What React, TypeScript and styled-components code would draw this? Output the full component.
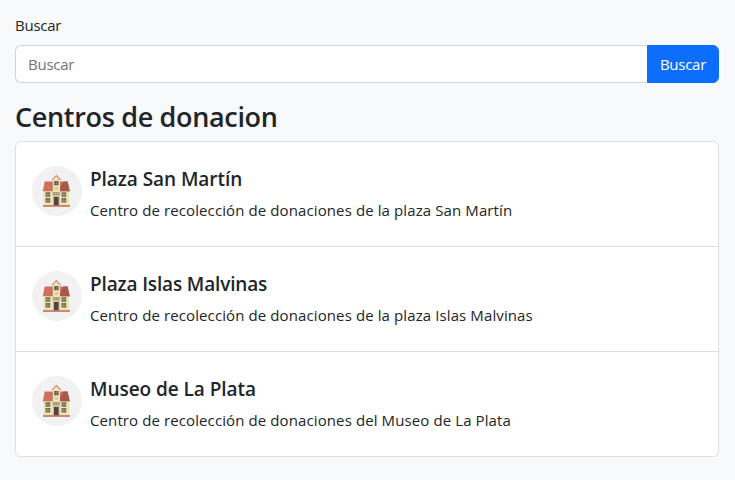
import React from "react";
import styled, { createGlobalStyle } from "styled-components";

const GlobalStyle = createGlobalStyle`
  *, *::before, *::after { box-sizing: border-box; }
  body {
    margin: 0;
    background: #f8f9fb;
    color: #212529;
    font-family: "Open Sans", "Noto Sans", sans-serif;
    font-size: 15px;
    line-height: 24px;
  }
`;

const Page = styled.main`
  display: flex;
  flex-direction: column;
  min-height: 480px;
  padding: 13px 16px 23px 15px;
`;

const Label = styled.label`
  align-self: flex-start;
  margin-bottom: 8px;
  letter-spacing: -0.25px;
`;

const SearchGroup = styled.form`
  display: flex;
  height: 38px;
`;

const SearchInput = styled.input`
  flex: 1;
  min-width: 0;
  padding: 6px 12px;
  border: 1px solid #ced4da;
  border-right: 0;
  border-radius: 6px 0 0 6px;
  background: #fff;
  color: #212529;
  font: inherit;
  letter-spacing: -0.25px;
  outline: none;
  &::placeholder { color: #6c757d; opacity: 1; }
`;

const SearchButton = styled.button`
  width: 72px;
  padding: 6px 0;
  border: 1px solid #0d6efd;
  border-radius: 0 6px 6px 0;
  background: #0d6efd;
  color: #fff;
  font: inherit;
  letter-spacing: -0.25px;
`;

const Heading = styled.h1`
  margin: 17px 0 7px;
  font-size: 27px;
  font-weight: 600;
  line-height: 34px;
  letter-spacing: -0.33px;
`;

const List = styled.ul`
  margin: 0;
  padding: 0;
  list-style: none;
  border: 1px solid #dfdfdf;
  border-radius: 6px;
  background: #fff;
  overflow: hidden;
`;

const Item = styled.li`
  display: flex;
  align-items: flex-start;
  gap: 8px;
  height: 105px;
  padding: 24px 16px;
  & + & { border-top: 1px solid #dfdfdf; }
  &:first-child { height: 104px; }
`;

const Picture = styled.svg`
  flex: none;
  width: 50px;
  height: 50px;
`;

const Title = styled.h2<{ $spacing: number }>`
  margin: 1px 0 7px;
  font-size: 19px;
  font-weight: 600;
  line-height: 24px;
  white-space: nowrap;
  letter-spacing: ${(p) => p.$spacing}px;
`;

const Description = styled.p`
  margin: 0;
  line-height: 24px;
  white-space: nowrap;
  letter-spacing: 0.105px;
`;

const sideWindows = [
  [13.6, 26.2], [13.6, 32], [29.6, 26.2], [29.6, 32],
];

function House() {
  return (
    <Picture viewBox="0 0 50 50" aria-hidden="true">
      <circle cx="25" cy="25" r="25" fill="#f2f2f2" />
      <path d="M7 13l4-4M38 44l5-5M6 39l6-6M40 11l3-3" stroke="#ececec" strokeWidth="1" />
      <path d="M11.5 25H37v14.5H11.5z" fill="#ebe3b2" />
      <path d="M12.7 15.6H35.6l2.2 9.7H10.8z" fill="#cf705b" />
      <path d="M28 22.5l3.5-6.9h4l2.3 9.7H28z" fill="#a9594b" />
      <path d="M20.8 14l3.5-4 3.7 4v12h-7.2z" fill="#eee6b8" />
      <path d="M20 14.2l4.3-4.7 4.4 4.7" fill="none" stroke="#d9806c" strokeWidth="1.1" />
      <path d="M22.2 15h4.4v4.2h-4.4z" fill="#5f564e" />
      <path d="M24.4 15v4.2M22.2 17h4.4" stroke="#bdb596" strokeWidth=".4" />
      <path d="M23 21.3h3v2.4h-3z" fill="#d2c896" />
      {sideWindows.map(([x, y]) => (
        <g key={`${x}-${y}`}>
          <path d={`M${x} ${y}h4.6v4.6h-4.6z`} fill="#6b6354" />
          <path d={`M${x + 2.3} ${y}v4.6M${x} ${y + 2.3}h4.6`} stroke="#c9c099" strokeWidth=".5" />
        </g>
      ))}
      <path d="M20.8 26h7v3.6h-7z" fill="#a79a7a" />
      <path d="M22.8 26v3.6M26 26v3.6" stroke="#d6ca9b" strokeWidth=".5" />
      <path d="M22 31h4.7v8.5H22z" fill="#514248" />
      <path d="M21.5 39.5V30.7h5.6v8.8" fill="none" stroke="#9a8c74" strokeWidth=".5" />
      <path d="M11 39.2h27v1.6H11z" fill="#bf6450" />
    </Picture>
  );
}

const centers = [
  {
    name: "Plaza San Martín",
    description: "Centro de recolección de donaciones de la plaza San Martín",
    nameSpacing: -0.06,
  },
  {
    name: "Plaza Islas Malvinas",
    description: "Centro de recolección de donaciones de la plaza Islas Malvinas",
    nameSpacing: -0.15,
  },
  {
    name: "Museo de La Plata",
    description: "Centro de recolección de donaciones del Museo de La Plata",
    nameSpacing: -0.05,
  },
];

export default function App() {
  return (
    <>
      <GlobalStyle />
      <Page>
        <Label htmlFor="search">Buscar</Label>
        <SearchGroup onSubmit={(e) => e.preventDefault()}>
          <SearchInput id="search" placeholder="Buscar" />
          <SearchButton>Buscar</SearchButton>
        </SearchGroup>
        <Heading>Centros de donacion</Heading>
        <List>
          {centers.map((c) => (
            <Item key={c.name}>
              <House />
              <div>
                <Title $spacing={c.nameSpacing}>{c.name}</Title>
                <Description>{c.description}</Description>
              </div>
            </Item>
          ))}
        </List>
      </Page>
    </>
  );
}
